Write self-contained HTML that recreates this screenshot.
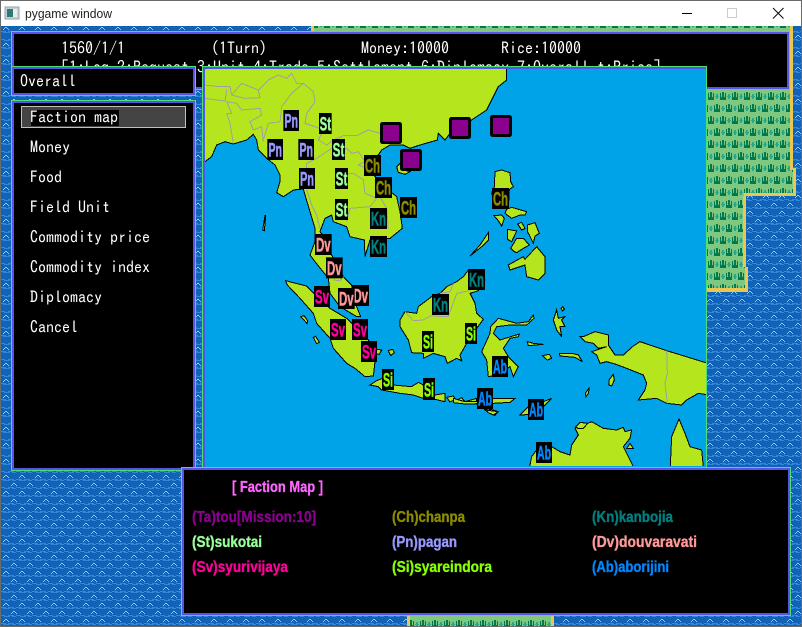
<!DOCTYPE html>
<html>
<head>
<meta charset="utf-8">
<style>
html,body{margin:0;padding:0;background:#fff;width:802px;height:627px;overflow:hidden}
svg{display:block}
.m{font-family:"IPAGothic","Liberation Mono",monospace;font-size:16px;fill:#fff}
.b{font-family:"Liberation Sans",sans-serif;font-weight:bold;font-size:16px;stroke-width:.35px}
.k{font-family:"Liberation Sans",sans-serif;font-weight:bold;font-size:58px;stroke-width:1.5px}
.land polygon{fill:#B5E61D;stroke:#000;stroke-width:3;shape-rendering:crispEdges}
.bd polyline{fill:none;stroke:#a0a0a0;stroke-width:3;shape-rendering:crispEdges}
</style>
</head>
<body>
<svg width="802" height="627" viewBox="0 0 802 627" xmlns="http://www.w3.org/2000/svg">
<defs>
<pattern id="sea" width="16" height="16" patternUnits="userSpaceOnUse" patternTransform="translate(0 26)">
<rect width="16" height="16" fill="#1262b8"/>
<g fill="#2f88dc">
<rect x="0" y="5" width="6" height="1"/><rect x="8" y="5" width="6" height="1"/>
<rect x="3" y="6" width="7" height="1"/><rect x="12" y="6" width="4" height="1"/>
<rect x="0" y="13" width="5" height="1"/><rect x="8" y="13" width="6" height="1"/>
<rect x="4" y="14" width="6" height="1"/><rect x="12" y="14" width="4" height="1"/>
</g>
<g fill="#93cdf2">
<rect x="5" y="1" width="2" height="1"/><rect x="4" y="2" width="1" height="1"/><rect x="7" y="2" width="1" height="1"/><rect x="3" y="3" width="1" height="1"/><rect x="8" y="3" width="1" height="1"/>
<rect x="13" y="9" width="2" height="1"/><rect x="12" y="10" width="1" height="1"/><rect x="15" y="10" width="1" height="1"/><rect x="11" y="11" width="1" height="1"/><rect x="0" y="11" width="1" height="1"/>
</g>
</pattern>
<pattern id="grass" width="12" height="24" patternUnits="userSpaceOnUse" patternTransform="translate(707 91)">
<rect width="12" height="24" fill="#80c880"/>
<g fill="#007a4c">
<rect x="1" y="2" width="1" height="7"/><rect x="3" y="1" width="2" height="8"/><rect x="6" y="2" width="1" height="7"/><rect x="1" y="6" width="6" height="3"/>
<rect x="7" y="14" width="1" height="7"/><rect x="9" y="13" width="2" height="8"/><rect x="0" y="14" width="1" height="7"/><rect x="7" y="18" width="5" height="3"/><rect x="0" y="18" width="1" height="3"/>
</g>
<g fill="#2aa888">
<rect x="9" y="3" width="2" height="5"/><rect x="8" y="5" width="4" height="1"/>
<rect x="3" y="15" width="2" height="5"/><rect x="2" y="17" width="4" height="1"/>
</g>
</pattern>
<clipPath id="mc"><rect x="205" y="69" width="501" height="397"/></clipPath>
</defs>

<!-- background sea -->
<rect x="0" y="26" width="802" height="601" fill="url(#sea)"/>

<!-- grass -->
<polygon points="312,26 791,26 791,170 794,170 794,194 746,194 746,292 312,292" fill="url(#grass)"/>
<g fill="#e8c850">
<rect x="311" y="26" width="3" height="6"/>
<rect x="790" y="26" width="3" height="144"/>
<rect x="793" y="168" width="3" height="28"/>
<rect x="744" y="193" width="52" height="3"/>
<rect x="743" y="196" width="3" height="71"/>
<rect x="745" y="267" width="3" height="25"/>
<rect x="707" y="288" width="41" height="4"/>
</g>
<rect x="409" y="616" width="143" height="10" fill="url(#grass)"/>
<rect x="407" y="616" width="3" height="10" fill="#e8c850"/>
<rect x="551" y="616" width="3" height="10" fill="#e8c850"/>

<!-- info panel -->
<rect x="11.5" y="31.5" width="778" height="58" fill="#000" stroke="#50e070"/>
<rect x="13" y="33" width="775" height="55" fill="none" stroke="#5555ee" stroke-width="2"/>
<text class="m" x="61" y="54">1560/1/1</text>
<text class="m" x="211" y="54">(1Turn)</text>
<text class="m" x="361" y="54">Money:10000</text>
<text class="m" x="501" y="54">Rice:10000</text>
<text class="m" x="61" y="73">[1:Log 2:Request 3:Unit 4:Trade 5:Settlement 6:Diplomacy 7:Overall t:Price]</text>

<!-- overall panel -->
<rect x="11.5" y="66.5" width="184" height="29" fill="#000" stroke="#50e070"/>
<rect x="13" y="68" width="181" height="26" fill="none" stroke="#5555ee" stroke-width="2"/>
<text class="m" x="20" y="87">Overall</text>

<!-- menu panel -->
<rect x="11.5" y="100.5" width="184" height="370" fill="#000" stroke="#50e070"/>
<rect x="13" y="102" width="181" height="367" fill="none" stroke="#5555ee" stroke-width="2"/>
<rect x="21.5" y="106.5" width="164" height="21" fill="#444" stroke="#c0c0c0"/>
<rect x="31" y="110" width="88" height="16" fill="#000"/>
<text class="m" x="30" y="123">Faction map</text>
<text class="m" x="30" y="153">Money</text>
<text class="m" x="30" y="183">Food</text>
<text class="m" x="30" y="213">Field Unit</text>
<text class="m" x="30" y="243">Commodity price</text>
<text class="m" x="30" y="273">Commodity index</text>
<text class="m" x="30" y="303">Diplomacy</text>
<text class="m" x="30" y="333">Cancel</text>

<!-- map -->
<rect x="202.5" y="66.5" width="504" height="401" fill="#00A2E8" stroke="#50e070"/>
<rect x="203" y="67" width="503" height="2" fill="#5555ee"/>
<rect x="203" y="67" width="2" height="400" fill="#5555ee"/>
<g clip-path="url(#mc)">
<g transform="translate(200 65) scale(.33333)">
<g class="land">
<polygon points="0,-30 920,-30 920,45 895,65 865,125 860,135 815,165 750,205 735,225 715,205 712,225 660,240 630,250 610,240 570,240 545,255 535,270 500,280 505,305 525,335 560,370 590,395 600,440 607,490 570,520 510,525 495,575 493,525 450,515 440,485 400,470 395,450 375,460 360,500 368,510 395,570 430,635 455,660 460,700 482,755 470,755 420,725 390,685 385,640 345,590 330,570 345,530 345,490 330,440 318,400 310,372 280,375 250,395 230,383 240,350 240,330 225,300 200,280 175,255 170,225 160,208 140,225 100,237 75,230 50,240 35,275 12,292 0,300"/>
<polygon points="590,305 600,295 610,315 630,320 615,328 595,322"/>
<polygon points="188,495 195,452 197,452 193,497"/>
</g>
<g class="bd">
<polyline points="12,60 60,65 90,65 95,90 125,55 175,75 205,45 235,30 260,40 275,25 290,55 310,55 340,80 345,110 320,145 315,175 345,185 370,195 355,225 380,240 400,225 430,212 470,212 505,195 540,205"/>
<polyline points="12,100 75,108 80,75"/>
<polyline points="95,90 135,100 180,98 175,75"/>
<polyline points="80,110 110,115 125,135 180,130 185,150 150,170 160,195 185,185 190,230"/>
<polyline points="80,110 95,145 80,145 90,175 100,235"/>
<polyline points="190,225 205,175 240,170 245,125 275,85 310,55"/>
<polyline points="395,250 350,280 320,295 318,370"/>
<polyline points="395,250 440,250 455,265 475,260 495,290 475,300 500,310"/>
<polyline points="415,330 460,325 490,345 495,385 530,400 510,425 450,430 440,470"/>
<polyline points="530,340 525,370 560,430 565,490"/>
<polyline points="320,375 335,420 350,450 360,490"/>
</g>
</g>
<g transform="translate(200 260) scale(.33333)">
<g class="land">
<polygon points="257,62 295,72 320,78 342,100 390,145 440,175 505,240 530,280 525,305 520,348 495,350 465,325 440,310 400,265 390,235 350,190 340,160 300,115 262,75"/>
<polygon points="302,170 312,167 323,182 321,190"/>
<polygon points="340,232 347,229 358,247 350,251"/>
<polygon points="530,268 545,270 538,283 530,282"/>
<polygon points="565,272 578,268 583,278 572,287"/>
<polygon points="600,180 600,200 625,240 635,278 670,280 670,295 700,280 735,290 742,310 770,295 785,302 780,285 800,250 830,205 850,178 830,160 825,130 810,100 835,92 855,60 805,30 790,50 770,65 740,80 720,100 695,110 655,140 650,160 615,155"/>
<polygon points="510,375 530,362 548,355 580,375 635,380 655,367 670,375 705,405 735,400 735,425 705,418 670,415 640,405 600,400 545,390 535,380"/>
<polygon points="740,412 760,408 766,418 750,426"/>
<polygon points="775,418 785,413 795,425 830,415 830,432 795,432 780,428"/>
<polygon points="850,445 880,450 895,455 885,466 870,455"/>
</g>
<g class="bd">
<polyline points="400,60 420,62 430,50"/>
<polyline points="615,155 640,182 670,180 690,168 745,170 770,100 810,92"/>
<polyline points="720,100 750,95 760,70"/>
</g>
</g>
<g transform="translate(470 150) scale(.33333)">
<g class="land">
<polygon points="75,65 95,60 120,68 122,95 130,110 118,118 115,175 85,175 65,130 73,110"/>
<polygon points="110,178 125,172 170,185 165,195 150,195 125,205 105,190"/>
<polygon points="72,197 95,195 103,205 95,228 85,212"/>
<polygon points="112,238 140,243 125,275 113,268"/>
<polygon points="122,295 140,265 160,265 178,285 160,295 140,308 130,303"/>
<polygon points="143,222 155,217 165,235 155,240"/>
<polygon points="172,225 195,218 208,250 195,258 190,280 178,255 172,245"/>
<polygon points="0,318 30,285 55,248 55,270 35,290"/>
<polygon points="115,345 160,320 165,328 200,290 225,320 225,370 205,390 170,380 165,345 120,360"/>
</g>
</g>
<g transform="translate(460 220) scale(.33333)">
<g class="land">
<polygon points="65,395 90,340 92,320 115,295 170,310 205,305 220,285 222,295 200,315 150,315 110,320 100,340 120,360 178,342 175,350 150,355 130,385 145,410 175,440 160,470 150,440 110,465 85,470 80,420"/>
<polygon points="280,300 290,270 295,295 315,290 305,300 315,320 300,320 305,350 290,330"/>
<polygon points="303,265 308,260 313,267 308,273"/>
<polygon points="360,350 370,350 405,335 445,345 445,375 465,405 490,405 520,378 540,365 620,392 760,435 760,527 715,520 680,540 665,555 620,550 590,535 535,540 555,510 560,490 550,465 500,445 465,432 440,425 420,430 410,405 395,395 440,380 415,385 400,370 375,365"/>
<polygon points="298,400 335,400 355,405 367,425 345,412 300,408"/>
<polygon points="247,407 268,403 275,415 262,420"/>
<polygon points="202,365 220,370 250,373 205,377"/>
<polygon points="447,480 460,463 463,480 455,498 447,495"/>
<polygon points="376,520 388,503 385,520 378,530"/>
<polygon points="-20,535 15,545 50,545 100,535 165,535 150,547 100,550 15,552 -20,548"/>
<polygon points="75,570 115,575 100,585 85,578"/>
<polygon points="180,585 205,560 250,545 275,535 250,560 220,580 190,585"/>
<polygon points="205,760 215,710 230,690 275,680 300,695 330,705 335,675 355,645 345,625 395,605 430,625 470,630 490,622 495,635 515,630 510,655 490,680 500,700 530,760"/>
<polygon points="630,760 635,650 657,597 675,640 690,680 725,690 732,760"/>
<polygon points="347,620 360,607 383,610 370,625 355,626"/>
<polygon points="500,685 510,670 520,685"/>
</g>
<g class="bd">
<polyline points="620,392 622,460 615,490 622,550"/>
</g>
</g>
<!-- markers -->
<g transform="translate(200 65) scale(.33333)">
<g fill="#000">
<rect x="250" y="135" width="47" height="63"/><rect x="357" y="144" width="38" height="63"/><rect x="202" y="222" width="47" height="63"/><rect x="295" y="222" width="47" height="63"/><rect x="396" y="222" width="39" height="63"/><rect x="297" y="309" width="48" height="63"/><rect x="405" y="309" width="39" height="63"/><rect x="405" y="402" width="39" height="63"/>
<rect x="492" y="270" width="51" height="63"/><rect x="525" y="336" width="51" height="63"/><rect x="600" y="396" width="51" height="63"/><rect x="876" y="369" width="51" height="63"/>
<rect x="510" y="429" width="51" height="63"/><rect x="510" y="513" width="51" height="63"/><rect x="804" y="612" width="51" height="63"/><rect x="696" y="687" width="51" height="63"/>
<rect x="345" y="507" width="50" height="63"/><rect x="378" y="577" width="50" height="63"/><rect x="456" y="660" width="51" height="63"/>
<rect x="342" y="663" width="48" height="63"/><rect x="390" y="762" width="48" height="63"/><rect x="456" y="762" width="48" height="63"/><rect x="483" y="828" width="48" height="63"/>
<rect x="795" y="774" width="36" height="63"/><rect x="666" y="798" width="36" height="63"/><rect x="546" y="912" width="36" height="63"/><rect x="669" y="939" width="36" height="66"/>
<rect x="831" y="969" width="48" height="63"/><rect x="876" y="873" width="48" height="63"/><rect x="984" y="1002" width="48" height="63"/><rect x="1008" y="1131" width="48" height="63"/>
</g>
<g class="k" fill="#9999ff" stroke="#9999ff">
<text x="253" y="188" textLength="41" lengthAdjust="spacingAndGlyphs">Pn</text>
<text x="205" y="275" textLength="41" lengthAdjust="spacingAndGlyphs">Pn</text>
<text x="298" y="275" textLength="41" lengthAdjust="spacingAndGlyphs">Pn</text>
<text x="300" y="362" textLength="42" lengthAdjust="spacingAndGlyphs">Pn</text>
</g>
<g class="k" fill="#99ff99" stroke="#99ff99">
<text x="359" y="197" textLength="34" lengthAdjust="spacingAndGlyphs">St</text>
<text x="398" y="275" textLength="35" lengthAdjust="spacingAndGlyphs">St</text>
<text x="407" y="362" textLength="35" lengthAdjust="spacingAndGlyphs">St</text>
<text x="407" y="455" textLength="35" lengthAdjust="spacingAndGlyphs">St</text>
</g>
<g class="k" fill="#8c8c00" stroke="#8c8c00">
<text x="495" y="323" textLength="45" lengthAdjust="spacingAndGlyphs">Ch</text>
<text x="528" y="389" textLength="45" lengthAdjust="spacingAndGlyphs">Ch</text>
<text x="603" y="449" textLength="45" lengthAdjust="spacingAndGlyphs">Ch</text>
<text x="879" y="422" textLength="45" lengthAdjust="spacingAndGlyphs">Ch</text>
</g>
<g class="k" fill="#008080" stroke="#008080">
<text x="513" y="482" textLength="45" lengthAdjust="spacingAndGlyphs">Kn</text>
<text x="513" y="566" textLength="45" lengthAdjust="spacingAndGlyphs">Kn</text>
<text x="807" y="665" textLength="45" lengthAdjust="spacingAndGlyphs">Kn</text>
<text x="699" y="740" textLength="45" lengthAdjust="spacingAndGlyphs">Kn</text>
</g>
<g class="k" fill="#ff9999" stroke="#ff9999">
<text x="348" y="560" textLength="44" lengthAdjust="spacingAndGlyphs">Dv</text>
<text x="381" y="630" textLength="44" lengthAdjust="spacingAndGlyphs">Dv</text>
<text x="460" y="713" textLength="44" lengthAdjust="spacingAndGlyphs">Dv</text>
</g>
<rect x="414" y="669" width="50" height="63" fill="#000"/>
<text class="k" fill="#ff9999" stroke="#ff9999" x="417" y="722" textLength="44" lengthAdjust="spacingAndGlyphs">Dv</text>
<g class="k" fill="#ff0099" stroke="#ff0099">
<text x="345" y="716" textLength="42" lengthAdjust="spacingAndGlyphs">Sv</text>
<text x="393" y="815" textLength="42" lengthAdjust="spacingAndGlyphs">Sv</text>
<text x="459" y="815" textLength="42" lengthAdjust="spacingAndGlyphs">Sv</text>
<text x="486" y="881" textLength="42" lengthAdjust="spacingAndGlyphs">Sv</text>
</g>
<g class="k" fill="#88ff00" stroke="#88ff00">
<text x="798" y="827" textLength="30" lengthAdjust="spacingAndGlyphs">Si</text>
<text x="669" y="851" textLength="30" lengthAdjust="spacingAndGlyphs">Si</text>
<text x="549" y="965" textLength="30" lengthAdjust="spacingAndGlyphs">Si</text>
<text x="672" y="994" textLength="30" lengthAdjust="spacingAndGlyphs">Si</text>
</g>
<g class="k" fill="#0088ff" stroke="#0088ff">
<text x="834" y="1022" textLength="42" lengthAdjust="spacingAndGlyphs">Ab</text>
<text x="879" y="926" textLength="42" lengthAdjust="spacingAndGlyphs">Ab</text>
<text x="987" y="1055" textLength="42" lengthAdjust="spacingAndGlyphs">Ab</text>
<text x="1011" y="1184" textLength="42" lengthAdjust="spacingAndGlyphs">Ab</text>
</g>
<!-- purple squares -->
<g fill="#8c0090" stroke="#000" stroke-width="9">
<rect x="544.5" y="175.5" width="57" height="57" rx="3"/>
<rect x="604.5" y="256.5" width="57" height="57" rx="3"/>
<rect x="751.5" y="160.5" width="57" height="57" rx="3"/>
<rect x="874.5" y="154.5" width="57" height="57" rx="3"/>
</g>
</g>
</g>

<!-- legend panel -->
<rect x="181.5" y="467.5" width="609" height="148" fill="#000" stroke="#50e070"/>
<rect x="183" y="469" width="606" height="145" fill="none" stroke="#5555ee" stroke-width="2"/>
<text class="b" fill="#ff66ff" stroke="#ff66ff" x="232" y="492" textLength="91" lengthAdjust="spacingAndGlyphs">[ Faction Map ]</text>
<text class="b" fill="#8c0090" stroke="#8c0090" x="192" y="522" textLength="124" lengthAdjust="spacingAndGlyphs">(Ta)tou[Mission:10]</text>
<text class="b" fill="#8c8c00" stroke="#8c8c00" x="392" y="522" textLength="73" lengthAdjust="spacingAndGlyphs">(Ch)chanpa</text>
<text class="b" fill="#008080" stroke="#008080" x="592" y="522" textLength="81" lengthAdjust="spacingAndGlyphs">(Kn)kanbojia</text>
<text class="b" fill="#99ff99" stroke="#99ff99" x="192" y="547" textLength="70" lengthAdjust="spacingAndGlyphs">(St)sukotai</text>
<text class="b" fill="#9999ff" stroke="#9999ff" x="392" y="547" textLength="65" lengthAdjust="spacingAndGlyphs">(Pn)pagan</text>
<text class="b" fill="#ff9999" stroke="#ff9999" x="592" y="547" textLength="105" lengthAdjust="spacingAndGlyphs">(Dv)douvaravati</text>
<text class="b" fill="#ff0099" stroke="#ff0099" x="192" y="572" textLength="96" lengthAdjust="spacingAndGlyphs">(Sv)syurivijaya</text>
<text class="b" fill="#88ff00" stroke="#88ff00" x="392" y="572" textLength="100" lengthAdjust="spacingAndGlyphs">(Si)syareindora</text>
<text class="b" fill="#0088ff" stroke="#0088ff" x="592" y="572" textLength="77" lengthAdjust="spacingAndGlyphs">(Ab)aborijini</text>

<!-- title bar -->
<rect x="0" y="0" width="802" height="26" fill="#fff"/>
<rect x="0" y="0" width="802" height="1" fill="#6a6a6a"/>
<rect x="0" y="0" width="1" height="627" fill="#6a6a6a"/>
<rect x="801" y="0" width="1" height="627" fill="#6a6a6a"/>
<rect x="0" y="626" width="802" height="1" fill="#6a6a6a"/>
<rect x="5" y="7" width="14" height="12" fill="#c8d0d4" stroke="#9aa4a8"/>
<rect x="7" y="9" width="6" height="8" fill="#2e7a78"/>
<rect x="13" y="9" width="4" height="8" fill="#e8eef0"/>
<text x="25" y="18" font-family="'Liberation Sans',sans-serif" font-size="12.5" fill="#222" textLength="87" lengthAdjust="spacingAndGlyphs">pygame window</text>
<rect x="682" y="13" width="10" height="1" fill="#000"/>
<rect x="727.5" y="8.5" width="9" height="9" fill="none" stroke="#ccc"/>
<path d="M773 8 L783.5 18.5 M783.5 8 L773 18.5" stroke="#111" stroke-width="1.1" fill="none"/>
</svg>
</body>
</html>
